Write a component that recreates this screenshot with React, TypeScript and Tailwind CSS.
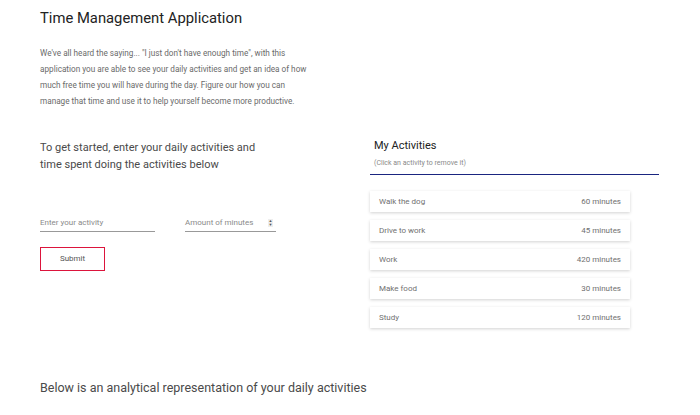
const activities = [
  { name: "Walk the dog", minutes: 60 },
  { name: "Drive to work", minutes: 45 },
  { name: "Work", minutes: 420 },
  { name: "Make food", minutes: 30 },
  { name: "Study", minutes: 120 },
];

const intro = [
  "We've all heard the saying... \"I just don't have enough time\", with this",
  "application you are able to see your daily activities and get an idea of how",
  "much free time you will have during the day. Figure our how you can",
  "manage that time and use it to help yourself become more productive.",
];

export default function App() {
  return (
    <div className="min-h-[415px] w-[700px] bg-white font-['Roboto',sans-serif] text-[#333]">
      <div className="pl-10 pt-[9px]">
        <h1 className="text-[14.8px] leading-[19px] text-[#222]">Time Management Application</h1>
        <p className="mt-[17px] text-[8.2px] leading-[16px] whitespace-nowrap text-[#6a6a6a]">
          {intro.map((line) => (
            <span key={line} className="block">
              {line}
            </span>
          ))}
        </p>
      </div>

      <div className="mt-[30px] flex">
        <div className="w-[330px] pl-10">
          <p className="w-[230px] text-[11px] leading-[17px] text-[#4a4a4a]">
            To get started, enter your daily activities and time spent doing the activities below
          </p>
          <div className="mt-[44px] flex gap-[30px]">
            <div className="w-[115px] border-b-[1.5px] border-[#999] pb-[2px] text-[8px] leading-[12px] text-[#8a8a8a]">
              Enter your activity
            </div>
            <div className="flex w-[91px] items-center justify-between border-b-[1.5px] border-[#999] pb-[2px] text-[8px] leading-[12px] text-[#8a8a8a]">
              <span>Amount of minutes</span>
              <span className="mr-[3px] flex h-[8px] w-[5px] flex-col items-center justify-center bg-[#eee] text-[4px] leading-[4px] text-[#555]">
                <span>▲</span>
                <span>▼</span>
              </span>
            </div>
          </div>
          <button className="mt-[15px] h-[24px] w-[65px] border-[1.5px] border-[#dc143c] text-[8px] text-[#555]">
            Submit
          </button>
        </div>

        <div className="ml-10 w-[289px]">
          <div className="border-b-[1.5px] border-[#1a2580] pb-[6px] pl-1">
            <h2 className="text-[11px] leading-[14px] text-[#222]">My Activities</h2>
            <p className="mt-[6px] text-[7px] leading-[9px] text-[#8a8a8a]">
              (Click an activity to remove it)
            </p>
          </div>
          <ul className="mt-[16px] flex w-[260px] flex-col gap-[8px]">
            {activities.map((activity) => (
              <li
                key={activity.name}
                className="flex h-[21px] items-center justify-between bg-white pl-[9px] pr-[9px] text-[8px] text-[#707070] shadow-[0_1px_3px_rgba(0,0,0,0.18)]"
              >
                <span>{activity.name}</span>
                <span>{activity.minutes} minutes</span>
              </li>
            ))}
          </ul>
        </div>
      </div>

      <p className="mt-[53px] pl-10 text-[12.5px] leading-[14px] text-[#4a4a4a]">
        Below is an analytical representation of your daily activities
      </p>
    </div>
  );
}
